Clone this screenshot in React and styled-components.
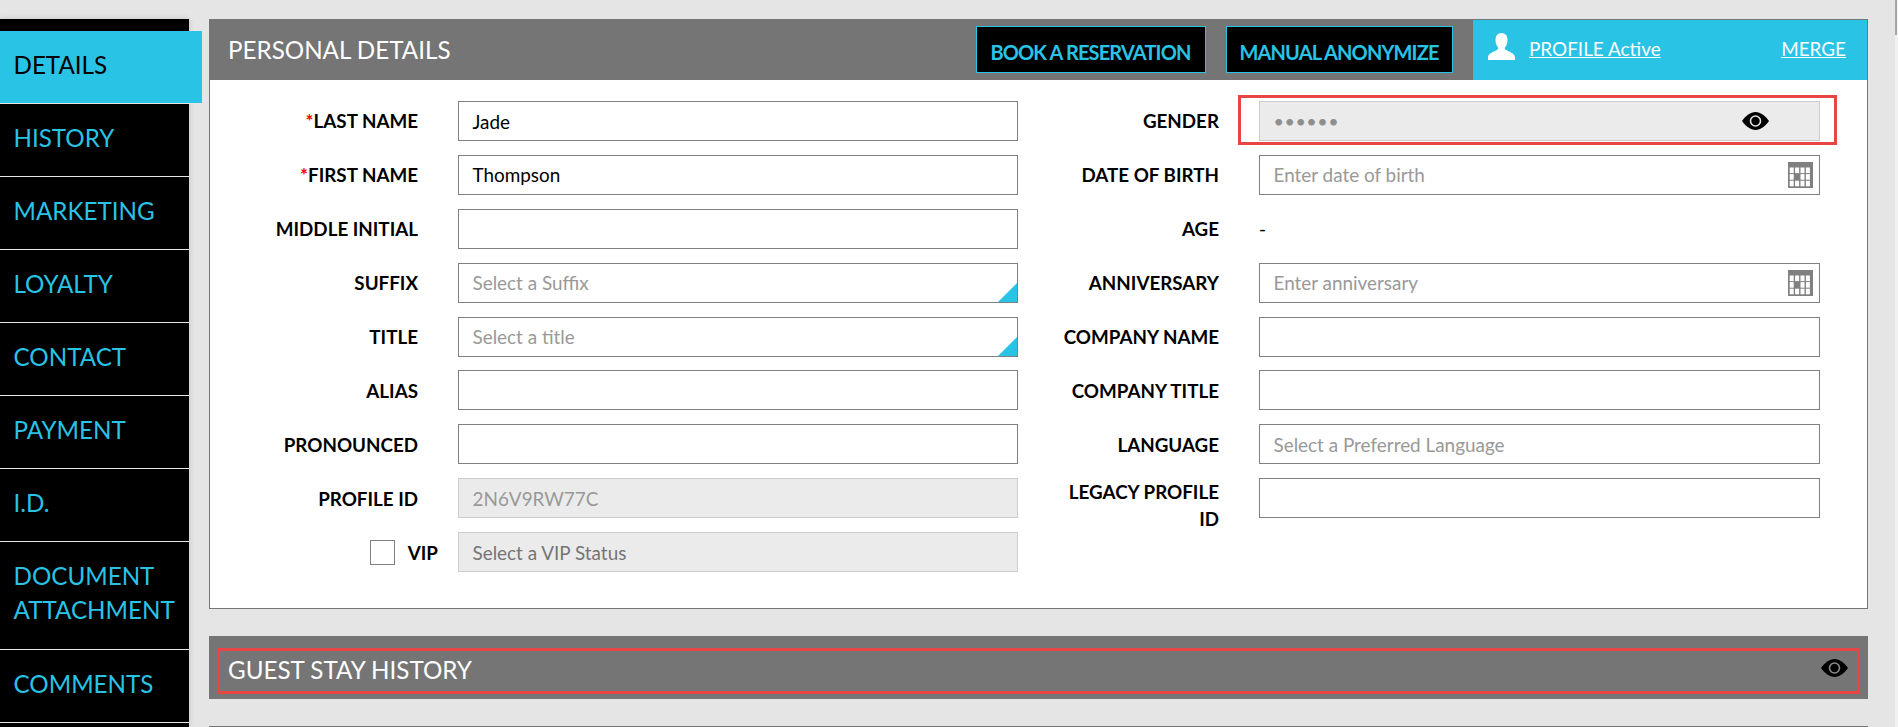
import styled, { createGlobalStyle } from 'styled-components';

const GlobalStyle = createGlobalStyle`
  html, body {
    margin: 0;
    height: 100%;
    overflow: hidden;
    background: #e5e5e5;
    font-family: Lato, "Open Sans", sans-serif;
  }
  * { box-sizing: border-box; }
`

const Page = styled.div`
  display: flex;
  align-items: flex-start;
  height: 727px;
  padding-top: 19px;
  overflow: hidden;
`

const Sidebar = styled.nav`
  flex: none;
  width: 189px;
  height: 708px;
  padding-top: 12px;
  background: #000;
  box-shadow: 0 0 6px rgba(0, 0, 0, 0.15);
`

const NavItem = styled.div`
  height: ${props => props.$tall ? 108 : 73}px;
  width: ${props => props.$active ? 202 : 189}px;
  padding: 16.6px 8px 0 13.5px;
  font-size: 24.2px;
  line-height: 34px;
  color: ${props => props.$active ? '#000' : '#29c3e6'};
  background: ${props => props.$active ? '#29c3e6' : 'transparent'};
  border-bottom: 1px solid #e8e8e8;
  position: relative;
`

const Content = styled.main`
  flex: none;
  width: 1659px;
  margin-left: 20px;
`

const Panel = styled.section`
  height: 590px;
  background: #fff;
  border: 1px solid #757575;
`

const PanelHeader = styled.header`
  display: flex;
  align-items: stretch;
  height: 60px;
  background: #757575;
`

const PanelTitle = styled.h2`
  flex: 1;
  margin: 0;
  padding: 14px 0 0 18px;
  font-size: 24.2px;
  line-height: 32px;
  font-weight: 400;
  color: #fff;
`

const HeaderButton = styled.button`
  height: 47px;
  width: ${props => props.$w}px;
  margin: 6px 20px 0 0;
  padding: 5px 1px 0 0;
  background: #000;
  border: 1px solid #29c3e6;
  color: #29c3e6;
  font: 700 20px Lato, sans-serif;
  letter-spacing: -0.85px;
`

const ProfileBar = styled.div`
  display: flex;
  align-items: center;
  justify-content: space-between;
  width: 394px;
  padding: 0 21px 4px 15px;
  background: #29c3e6;
`

const ProfileInfo = styled.div`
  display: flex;
  align-items: center;
  gap: 14px;
`

const WhiteLink = styled.a`
  font-size: 18.9px;
  color: #fff;
  text-decoration: underline;
`

const FormBody = styled.div`
  display: flex;
  padding-top: 21px;
`

const FormColumn = styled.div`
  display: flex;
  flex-direction: column;
  gap: 13.875px;
`

const Row = styled.div`
  display: grid;
  grid-template-columns: ${props => props.$labelW}px ${props => props.$fieldW}px;
  column-gap: 40px;
  min-height: 40px;
`

const Label = styled.label`
  align-self: ${props => props.$top ? 'start' : 'center'};
  text-align: right;
  font-size: 18.8px;
  font-weight: 700;
  line-height: ${props => props.$top ? 27 : 27.2}px;
  color: #000;
`

const Star = styled.span`
  color: #f00;
`

const VipLabel = styled.div`
  display: flex;
  align-items: center;
  justify-content: flex-end;
  gap: 13px;
  margin-right: -20px;
  font-size: 18.8px;
  font-weight: 700;
  color: #000;
`

const CheckBox = styled.span`
  width: 25px;
  height: 25px;
  background: #fff;
  border: 1px solid #808080;
`

const Field = styled.div`
  position: relative;
  display: flex;
  align-items: center;
  justify-content: space-between;
  height: 40px;
  padding: 0 ${props => props.$pr || 13.5}px 0 13.5px;
  font-size: 18.9px;
  background: ${props => props.$disabled ? '#ebebeb' : '#fff'};
  border: 1px solid ${props => props.$disabled ? '#cccccc' : '#808080'};
  color: ${props => props.$color || '#000'};
`

const Plain = styled.div`
  align-self: center;
  font-size: 18.9px;
  color: #000;
`

const Corner = styled.span`
  position: absolute;
  right: 0;
  bottom: 0;
  width: 0;
  height: 0;
  border-style: solid;
  border-width: 0 0 19px 19px;
  border-color: transparent transparent #29c3e6 transparent;
`

const Highlight = styled.span`
  position: absolute;
  top: -7px;
  bottom: -5px;
  left: -22px;
  right: -18px;
  border: 3px solid #e94545;
  pointer-events: none;
`

const Dots = styled.span`
  font-size: 18px;
  letter-spacing: 0.5px;
  color: #8f8f8f;
`

const Collapsed = styled.section`
  height: 63px;
  margin-top: 27px;
  padding: 12px 8px 5px;
  background: #757575;
`

const CollapsedInner = styled.div`
  display: flex;
  align-items: center;
  justify-content: space-between;
  height: 46px;
  padding: 0 9px 4px 8px;
  border: 3px solid #e94545;
`

const CollapsedTitle = styled.h2`
  margin: 0;
  font-size: 24.2px;
  font-weight: 400;
  color: #fff;
`

const NextPanel = styled.section`
  height: 200px;
  margin-top: 27px;
  background: #fff;
  border-top: 1px solid #757575;
`

const ScrollTrack = styled.div`
  flex: none;
  width: 3px;
  height: 727px;
  margin: -19px 0 0 27px;
  background: #f1f1f1;
`

const ScrollThumb = styled.div`
  width: 2px;
  height: 35px;
  background: #a6a6a6;
`

const EyeSvg = styled.svg`
  flex: none;
  margin-bottom: ${props => props.$lift || 0}px;
`

const PersonSvg = styled.svg`
  flex: none;
  margin-bottom: 3px;
`

function EyeIcon({ ring, lift }) {
  return (
    <EyeSvg $lift={lift} width="27" height="18" viewBox="0 0 27 18">
      <path fill="#000" d="M0 9C4 3.5 8.5 0 13.5 0S23 3.5 27 9c-4 5.500-8.500 9-13.500 9S4 14.500 0 9z" />
      <circle cx="13.5" cy="9" r="5" fill="none" stroke={ring} strokeWidth="1.600" />
    </EyeSvg>
  )
}

function CalendarIcon() {
  const cells = []
  for (let r = 0; r < 3; r++) {
    for (let c = 0; c < 4; c++) {
      cells.push(<rect key={r + '-' + c} x={1.700 + c * 5.400} y={5.500 + r * 6.600} width="4" height="5.600" fill={r === 1 && c === 1 ? '#808080' : '#fff'} />)
    }
  }
  return (
    <svg width="25" height="26" viewBox="0 0 25 26">
      <rect width="25" height="26" fill="#808080" />
      {cells}
    </svg>
  )
}

function PersonIcon() {
  return (
    <PersonSvg width="27" height="27" viewBox="0 0 27 27">
      <path fill="#fff" d="M13.500 0c4 0 6 3 6 7 0 3-1 5.500-2.500 7.500-.6 1 0 2 1.500 2.800 3.500 1.700 8 3 8.500 7V27H0v-2.700c.5-4 5-5.300 8.500-7 1.500-.8 2.100-1.800 1.500-2.800C8.500 12.500 7.500 10 7.500 7c0-4 2-7 6-7z" />
    </PersonSvg>
  )
}

const leftFields = [
  { label: 'LAST NAME', required: true, value: 'Jade' },
  { label: 'FIRST NAME', required: true, value: 'Thompson' },
  { label: 'MIDDLE INITIAL' },
  { label: 'SUFFIX', placeholder: 'Select a Suffix', corner: true },
  { label: 'TITLE', placeholder: 'Select a title', corner: true },
  { label: 'ALIAS' },
  { label: 'PRONOUNCED' },
]

const navItems = ['HISTORY', 'MARKETING', 'LOYALTY', 'CONTACT', 'PAYMENT', 'I.D.']

function App() {
  return (
    <Page>
      <GlobalStyle />
      <Sidebar>
        <NavItem $active>DETAILS</NavItem>
        {navItems.map(item => <NavItem key={item}>{item}</NavItem>)}
        <NavItem $tall>DOCUMENT ATTACHMENT</NavItem>
        <NavItem>COMMENTS</NavItem>
      </Sidebar>
      <Content>
        <Panel>
          <PanelHeader>
            <PanelTitle>PERSONAL DETAILS</PanelTitle>
            <HeaderButton $w={230}>BOOK A RESERVATION</HeaderButton>
            <HeaderButton $w={227}>MANUAL ANONYMIZE</HeaderButton>
            <ProfileBar>
              <ProfileInfo>
                <PersonIcon />
                <WhiteLink>PROFILE Active</WhiteLink>
              </ProfileInfo>
              <WhiteLink>MERGE</WhiteLink>
            </ProfileBar>
          </PanelHeader>
          <FormBody>
            <FormColumn>
              {leftFields.map(f => (
                <Row key={f.label} $labelW={208} $fieldW={560}>
                  <Label>{f.required && <Star>*</Star>}{f.label}</Label>
                  <Field $color={f.placeholder ? '#999' : '#000'}>
                    {f.value || f.placeholder}
                    {f.corner && <Corner />}
                  </Field>
                </Row>
              ))}
              <Row $labelW={208} $fieldW={560}>
                <Label>PROFILE ID</Label>
                <Field $disabled $color="#999">2N6V9RW77C</Field>
              </Row>
              <Row $labelW={208} $fieldW={560}>
                <VipLabel><CheckBox />VIP</VipLabel>
                <Field $disabled $color="#757575">Select a VIP Status</Field>
              </Row>
            </FormColumn>
            <FormColumn>
              <Row $labelW={201} $fieldW={561}>
                <Label>GENDER</Label>
                <Field $disabled $pr={50}>
                  <Dots>••••••</Dots>
                  <EyeIcon ring="#e5e5e5" />
                  <Highlight />
                </Field>
              </Row>
              <Row $labelW={201} $fieldW={561}>
                <Label>DATE OF BIRTH</Label>
                <Field $color="#999" $pr={6}>Enter date of birth<CalendarIcon /></Field>
              </Row>
              <Row $labelW={201} $fieldW={561}>
                <Label>AGE</Label>
                <Plain>-</Plain>
              </Row>
              <Row $labelW={201} $fieldW={561}>
                <Label>ANNIVERSARY</Label>
                <Field $color="#999" $pr={6}>Enter anniversary<CalendarIcon /></Field>
              </Row>
              <Row $labelW={201} $fieldW={561}>
                <Label>COMPANY NAME</Label>
                <Field />
              </Row>
              <Row $labelW={201} $fieldW={561}>
                <Label>COMPANY TITLE</Label>
                <Field />
              </Row>
              <Row $labelW={201} $fieldW={561}>
                <Label>LANGUAGE</Label>
                <Field $color="#999">Select a Preferred Language</Field>
              </Row>
              <Row $labelW={201} $fieldW={561}>
                <Label $top>LEGACY PROFILE<br />ID</Label>
                <Field />
              </Row>
            </FormColumn>
          </FormBody>
        </Panel>
        <Collapsed>
          <CollapsedInner>
            <CollapsedTitle>GUEST STAY HISTORY</CollapsedTitle>
            <EyeIcon ring="#8a8a8a" lift={3} />
          </CollapsedInner>
        </Collapsed>
        <NextPanel />
      </Content>
      <ScrollTrack><ScrollThumb /></ScrollTrack>
    </Page>
  )
}

export default App
